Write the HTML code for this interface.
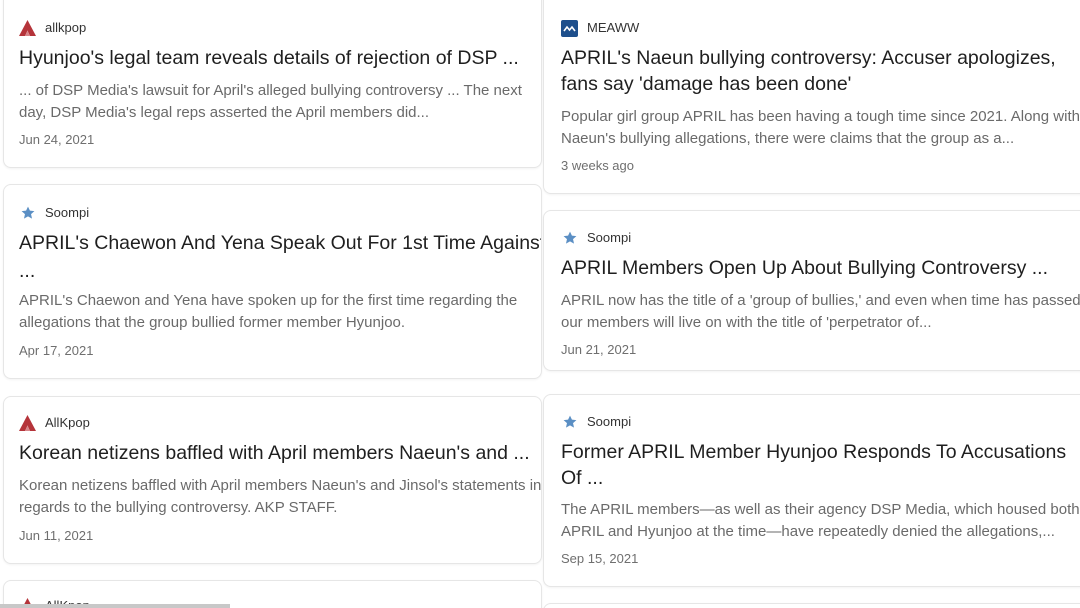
<!DOCTYPE html>
<html style="overflow:hidden"><head><meta charset="utf-8"><style>
html,body{margin:0;width:1080px;height:608px;overflow:hidden}
body{background:#fff;position:relative;font-family:"Liberation Sans",Arial,sans-serif}
.card{position:absolute;background:#fff;border:1px solid #e6e6e6;border-radius:8px;box-shadow:0 1px 2px rgba(0,0,0,0.05);overflow:hidden}
.t{position:absolute;white-space:nowrap;line-height:24px}
.src{font-size:13px;color:#333}
.ti{font-size:19.5px;color:#1f1f1f}
.sn{font-size:15px;color:#6a6a6a}
.dt{font-size:13px;color:#6f6f6f}
.ic{position:absolute}
</style></head><body>
<div class="card" style="left:3px;top:-10px;width:537px;height:176px">
<svg class="ic" style="left:15px;top:29px" width="17" height="16" viewBox="0 0 17 16"><path d="M8.5 0L17 16H11L8.5 10.5L6 16H0Z" fill="#b5343a"/><path d="M8.5 10.5L11 16H6Z" fill="#d8868a"/></svg>
<div class="t src" style="left:41px;top:25px">allkpop</div>
<div class="t ti" style="left:15px;top:55px">Hyunjoo's legal team reveals details of rejection of DSP ...</div>
<div class="t sn" style="left:15px;top:88px">... of DSP Media's lawsuit for April's alleged bullying controversy ... The next</div>
<div class="t sn" style="left:15px;top:110px">day, DSP Media's legal reps asserted the April members did...</div>
<div class="t dt" style="left:15px;top:137px">Jun 24, 2021</div>
</div>

<div class="card" style="left:3px;top:184px;width:537px;height:193px">
<svg class="ic" style="left:17px;top:21px" width="14" height="14" viewBox="0 0 24 24"><path d="M12 1l3.3 7 7.7.8-5.8 5.2 1.7 7.6L12 17.7 5.1 21.6l1.7-7.6L1 8.8 8.7 8z" fill="#5b8fc4"/></svg>
<div class="t src" style="left:41px;top:16px">Soompi</div>
<div class="t ti" style="left:15px;top:46px">APRIL's Chaewon And Yena Speak Out For 1st Time Against</div>
<div class="t ti" style="left:15px;top:74px">...</div>
<div class="t sn" style="left:15px;top:104px">APRIL's Chaewon and Yena have spoken up for the first time regarding the</div>
<div class="t sn" style="left:15px;top:126px">allegations that the group bullied former member Hyunjoo.</div>
<div class="t dt" style="left:15px;top:154px">Apr 17, 2021</div>
</div>

<div class="card" style="left:3px;top:396px;width:537px;height:166px">
<svg class="ic" style="left:15px;top:18px" width="17" height="16" viewBox="0 0 17 16"><path d="M8.5 0L17 16H11L8.5 10.5L6 16H0Z" fill="#b5343a"/><path d="M8.5 10.5L11 16H6Z" fill="#d8868a"/></svg>
<div class="t src" style="left:41px;top:14px">AllKpop</div>
<div class="t ti" style="left:15px;top:44px">Korean netizens baffled with April members Naeun's and ...</div>
<div class="t sn" style="left:15px;top:77px">Korean netizens baffled with April members Naeun's and Jinsol's statements in</div>
<div class="t sn" style="left:15px;top:99px">regards to the bullying controversy. AKP STAFF.</div>
<div class="t dt" style="left:15px;top:127px">Jun 11, 2021</div>
</div>

<div class="card" style="left:3px;top:580px;width:537px;height:40px;border-bottom:none;border-radius:8px 8px 0 0">
<svg class="ic" style="left:15px;top:17px" width="17" height="16" viewBox="0 0 17 16"><path d="M8.5 0L17 16H11L8.5 10.5L6 16H0Z" fill="#b5343a"/></svg>
<div class="t src" style="left:41px;top:13px">AllKpop</div>
</div>

<div class="card" style="left:543px;top:-10px;width:560px;height:202px">
<svg class="ic" style="left:17px;top:29px" width="17" height="17" viewBox="0 0 17 17"><rect width="17" height="17" rx="2" fill="#1e4f8c"/><path d="M3 11L6 7L8.5 10L11 7L14 11" stroke="#fff" stroke-width="1.6" fill="none"/></svg>
<div class="t src" style="left:43px;top:25px">MEAWW</div>
<div class="t ti" style="left:17px;top:55px">APRIL's Naeun bullying controversy: Accuser apologizes,</div>
<div class="t ti" style="left:17px;top:81px">fans say 'damage has been done'</div>
<div class="t sn" style="left:17px;top:114px">Popular girl group APRIL has been having a tough time since 2021. Along with</div>
<div class="t sn" style="left:17px;top:136px">Naeun's bullying allegations, there were claims that the group as a...</div>
<div class="t dt" style="left:17px;top:163px">3 weeks ago</div>
</div>

<div class="card" style="left:543px;top:210px;width:560px;height:159px">
<svg class="ic" style="left:19px;top:20px" width="14" height="14" viewBox="0 0 24 24"><path d="M12 1l3.3 7 7.7.8-5.8 5.2 1.7 7.6L12 17.7 5.1 21.6l1.7-7.6L1 8.8 8.7 8z" fill="#5b8fc4"/></svg>
<div class="t src" style="left:43px;top:15px">Soompi</div>
<div class="t ti" style="left:17px;top:45px">APRIL Members Open Up About Bullying Controversy ...</div>
<div class="t sn" style="left:17px;top:78px">APRIL now has the title of a 'group of bullies,' and even when time has passed</div>
<div class="t sn" style="left:17px;top:100px">our members will live on with the title of 'perpetrator of...</div>
<div class="t dt" style="left:17px;top:127px">Jun 21, 2021</div>
</div>

<div class="card" style="left:543px;top:394px;width:560px;height:191px">
<svg class="ic" style="left:19px;top:20px" width="14" height="14" viewBox="0 0 24 24"><path d="M12 1l3.3 7 7.7.8-5.8 5.2 1.7 7.6L12 17.7 5.1 21.6l1.7-7.6L1 8.8 8.7 8z" fill="#5b8fc4"/></svg>
<div class="t src" style="left:43px;top:15px">Soompi</div>
<div class="t ti" style="left:17px;top:45px">Former APRIL Member Hyunjoo Responds To Accusations</div>
<div class="t ti" style="left:17px;top:71px">Of ...</div>
<div class="t sn" style="left:17px;top:103px">The APRIL members—as well as their agency DSP Media, which housed both</div>
<div class="t sn" style="left:17px;top:125px">APRIL and Hyunjoo at the time—have repeatedly denied the allegations,...</div>
<div class="t dt" style="left:17px;top:152px">Sep 15, 2021</div>
</div>

<div class="card" style="left:543px;top:603px;width:560px;height:10px;border-bottom:none;border-radius:8px 8px 0 0"></div>
<div style="position:absolute;left:0;top:604px;width:230px;height:4px;background:#c8c8c8"></div>
</body></html>
